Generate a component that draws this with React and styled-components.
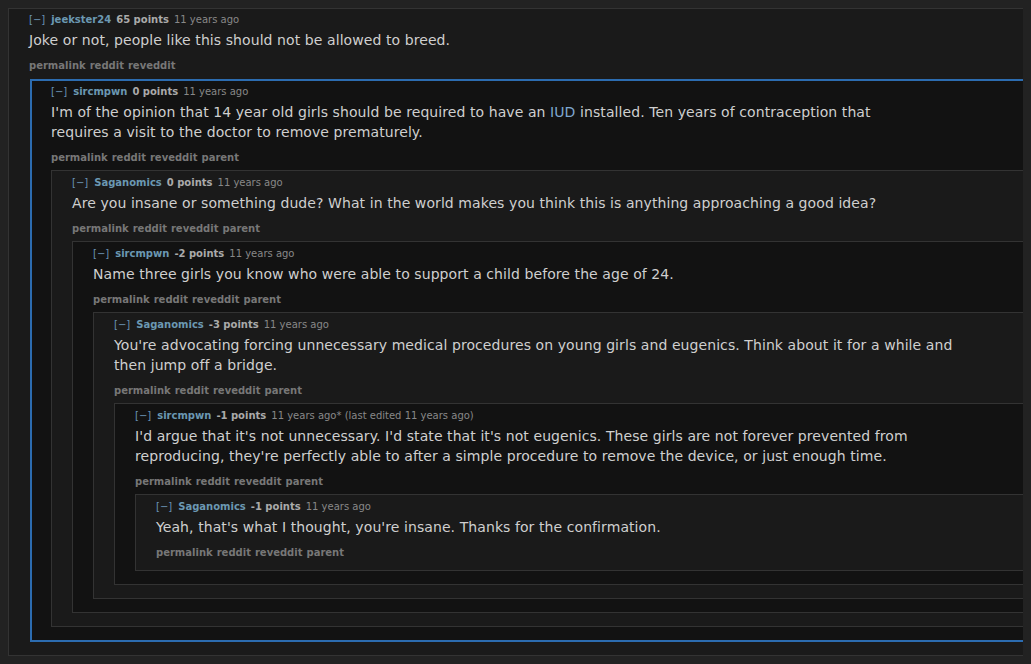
import React from "react";
import styled, { createGlobalStyle } from "styled-components";

const GlobalStyle = createGlobalStyle`
  html, body {
    background: #222222;
    overflow: hidden;
  }
  body {
    margin: 8px;
    font-family: "DejaVu Sans", Verdana, sans-serif;
  }
`;

const Thread = styled.div`
  width: 1100px;
`;

const Box = styled.div`
  background: ${(props) => (props.depth % 2 === 0 ? "#1a1a1a" : "#121212")};
  border: ${(props) =>
    props.highlight ? "2px solid #2c6cb0" : "1px solid #333333"};
  padding: ${(props) =>
    props.depth === 0
      ? "4px 0 10px 20px"
      : props.highlight
      ? "4px 0 10px 19px"
      : "5px 0 10px 20px"};
  margin: ${(props) =>
    props.depth === 0
      ? "0"
      : props.highlight
      ? "6px 0 3px 1px"
      : "5px 0 3px 0"};
`;

const Meta = styled.div`
  font-size: 10px;
  line-height: 14px;
  color: #888888;
  white-space: nowrap;
  display: flex;
  align-items: baseline;
`;

const Toggle = styled.span`
  color: #6a93b5;
  margin-right: 6px;
`;

const Author = styled.span`
  color: #6b98b2;
  font-weight: bold;
  margin-right: 5px;
`;

const Score = styled.span`
  color: #aaaaaa;
  font-weight: bold;
  margin-right: 5px;
`;

const Body = styled.div`
  color: #cfcfcf;
  font-size: 14px;
  line-height: 20px;
  letter-spacing: 0.08px;
  max-width: 855px;
  margin-top: 3px;
`;

const InlineLink = styled.span`
  color: #7fa7cf;
`;

const Links = styled.div`
  font-size: 10px;
  line-height: 14px;
  font-weight: bold;
  color: #777777;
  margin-top: 9px;
  display: flex;
  gap: 4px;
`;

const thread = {
  author: "jeekster24",
  score: "65 points",
  time: "11 years ago",
  body: "Joke or not, people like this should not be allowed to breed.",
  links: ["permalink", "reddit", "reveddit"],
  reply: {
    author: "sircmpwn",
    score: "0 points",
    time: "11 years ago",
    highlight: true,
    body: (
      <>
        I'm of the opinion that 14 year old girls should be required to have
        an <InlineLink>IUD</InlineLink> installed. Ten years of contraception
        that requires a visit to the doctor to remove prematurely.
      </>
    ),
    links: ["permalink", "reddit", "reveddit", "parent"],
    reply: {
      author: "Saganomics",
      score: "0 points",
      time: "11 years ago",
      body: "Are you insane or something dude? What in the world makes you think this is anything approaching a good idea?",
      links: ["permalink", "reddit", "reveddit", "parent"],
      reply: {
        author: "sircmpwn",
        score: "-2 points",
        time: "11 years ago",
        body: "Name three girls you know who were able to support a child before the age of 24.",
        links: ["permalink", "reddit", "reveddit", "parent"],
        reply: {
          author: "Saganomics",
          score: "-3 points",
          time: "11 years ago",
          body: "You're advocating forcing unnecessary medical procedures on young girls and eugenics. Think about it for a while and then jump off a bridge.",
          links: ["permalink", "reddit", "reveddit", "parent"],
          reply: {
            author: "sircmpwn",
            score: "-1 points",
            time: "11 years ago* (last edited 11 years ago)",
            body: "I'd argue that it's not unnecessary. I'd state that it's not eugenics. These girls are not forever prevented from reproducing, they're perfectly able to after a simple procedure to remove the device, or just enough time.",
            links: ["permalink", "reddit", "reveddit", "parent"],
            reply: {
              author: "Saganomics",
              score: "-1 points",
              time: "11 years ago",
              body: "Yeah, that's what I thought, you're insane. Thanks for the confirmation.",
              links: ["permalink", "reddit", "reveddit", "parent"],
            },
          },
        },
      },
    },
  },
};

const Comment = ({ comment, depth }) => (
  <Box depth={depth} highlight={comment.highlight}>
    <Meta>
      <Toggle>[−]</Toggle>
      <Author>{comment.author}</Author>
      <Score>{comment.score}</Score>
      <span>{comment.time}</span>
    </Meta>
    <Body>{comment.body}</Body>
    <Links>
      {comment.links.map((l) => (
        <span key={l}>{l}</span>
      ))}
    </Links>
    {comment.reply && <Comment comment={comment.reply} depth={depth + 1} />}
  </Box>
);

export default function App() {
  return (
    <>
      <GlobalStyle />
      <Thread>
        <Comment comment={thread} depth={0} />
      </Thread>
    </>
  );
}
